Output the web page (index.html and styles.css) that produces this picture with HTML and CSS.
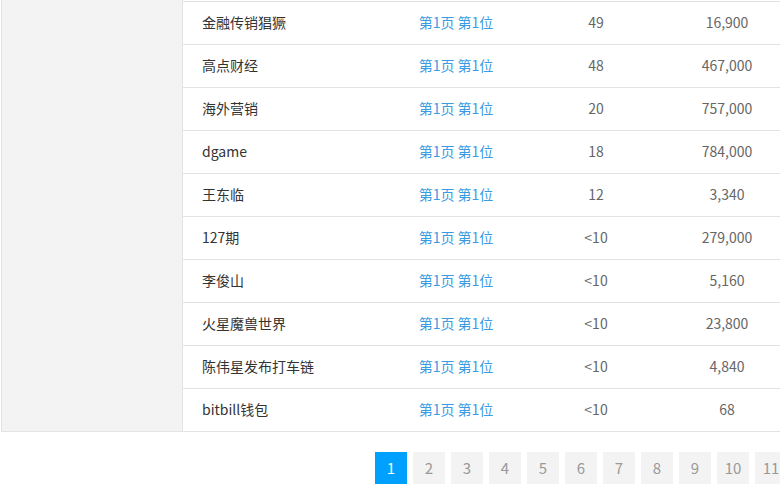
FILE: index.html
```html
<!DOCTYPE html>
<html lang="zh-CN">
<head>
    <meta charset="UTF-8">
    <meta name="viewport" content="width=device-width, initial-scale=1.0">
    <title>排名列表</title>
    <link rel="stylesheet" href="styles.css">
</head>
<body>
    <div class="layout">
        <div class="side"></div>

        <!-- ranking rows -->
        <div class="list">
            <div class="row"><span class="name">金融传销猖獗</span><a href="#" class="rank">第1页 第1位</a><span class="num">49</span><span class="num">16,900</span></div>
            <div class="row"><span class="name">高点财经</span><a href="#" class="rank">第1页 第1位</a><span class="num">48</span><span class="num">467,000</span></div>
            <div class="row"><span class="name">海外营销</span><a href="#" class="rank">第1页 第1位</a><span class="num">20</span><span class="num">757,000</span></div>
            <div class="row"><span class="name">dgame</span><a href="#" class="rank">第1页 第1位</a><span class="num">18</span><span class="num">784,000</span></div>
            <div class="row"><span class="name">王东临</span><a href="#" class="rank">第1页 第1位</a><span class="num">12</span><span class="num">3,340</span></div>
            <div class="row"><span class="name">127期</span><a href="#" class="rank">第1页 第1位</a><span class="num">&lt;10</span><span class="num">279,000</span></div>
            <div class="row"><span class="name">李俊山</span><a href="#" class="rank">第1页 第1位</a><span class="num">&lt;10</span><span class="num">5,160</span></div>
            <div class="row"><span class="name">火星魔兽世界</span><a href="#" class="rank">第1页 第1位</a><span class="num">&lt;10</span><span class="num">23,800</span></div>
            <div class="row"><span class="name">陈伟星发布打车链</span><a href="#" class="rank">第1页 第1位</a><span class="num">&lt;10</span><span class="num">4,840</span></div>
            <div class="row last"><span class="name">bitbill钱包</span><a href="#" class="rank">第1页 第1位</a><span class="num">&lt;10</span><span class="num">68</span></div>
        </div>
    </div>

    <!-- pagination -->
    <div class="pager">
        <a href="#" class="page active">1</a>
        <a href="#" class="page">2</a>
        <a href="#" class="page">3</a>
        <a href="#" class="page">4</a>
        <a href="#" class="page">5</a>
        <a href="#" class="page">6</a>
        <a href="#" class="page">7</a>
        <a href="#" class="page">8</a>
        <a href="#" class="page">9</a>
        <a href="#" class="page">10</a>
        <a href="#" class="page">11</a>
        <a href="#" class="page">12</a>
    </div>
</body>
</html>
```

FILE: styles.css
```css
html, body {
    margin: 0;
    overflow: hidden;
}
body {
    font-family: "Noto Sans CJK SC", "Microsoft YaHei", sans-serif;
    font-size: 14px;
    color: #333;
    background-color: white;
    width: 780px;
}
.layout {
    display: flex;
    margin-left: 1px;
    width: 820px;
}
.side {
    width: 180px;
    flex-shrink: 0;
    background-color: #f3f3f3;
    border-left: 1px solid #e3e3e3;
    border-right: 1px solid #e3e3e3;
    border-bottom: 1px solid #e3e3e3;
}
.list {
    flex: 1;
    padding-top: 1px;
}
.row {
    display: grid;
    grid-template-columns: 203px 140px 140px 122px;
    align-items: center;
    height: 40px;
    padding-bottom: 2px;
    border-top: 1px solid #e3e3e3;
    line-height: 20px;
}
.row.last {
    border-bottom: 1px solid #e3e3e3;
}
.name {
    padding-left: 19px;
    color: #333;
}
.rank {
    text-align: center;
    color: #3a9be3;
    text-decoration: none;
}
.num {
    text-align: center;
    color: #666;
}
.pager {
    display: flex;
    gap: 6px;
    margin-top: 20px;
    padding-left: 375px;
    white-space: nowrap;
}
.page {
    flex-shrink: 0;
    width: 32px;
    height: 32px;
    line-height: 32px;
    text-align: center;
    background-color: #f3f3f3;
    color: #999;
    font-size: 15px;
    text-decoration: none;
}
.page.active {
    background-color: #00a0ff;
    color: white;
}
```
